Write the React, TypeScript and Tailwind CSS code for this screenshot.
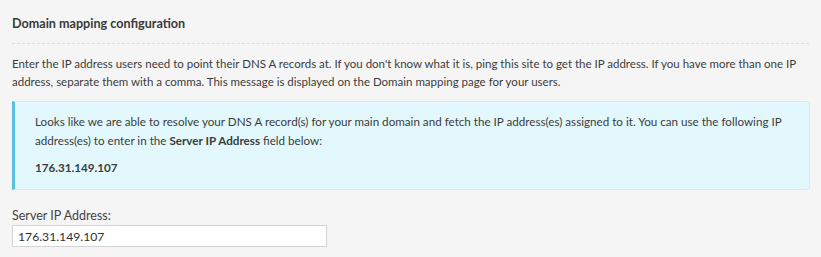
export default function App() {
  return (
    <div className="min-h-[257px] bg-[#f5f5f5] px-3 pt-[15px] font-['Lato',sans-serif] text-[#333]">
      <h3 className="text-[12.6px] font-bold leading-[18px] text-[#3a3a3a]">Domain mapping configuration</h3>
      <div className="mt-[10px] w-[797px] border-t border-dashed border-[#dcdcdc]" />
      <p className="mt-[11px] text-[11.5px] leading-[18px] text-[#3c3c3c]">
        Enter the IP address users need to point their DNS A records at. If you don't know what it is, ping this site to get the IP address. If you have more than one IP address, separate them with a comma. This message is displayed on the Domain mapping page for your users.
      </p>
      <div className="mt-[10px] w-[798px] rounded-r-[3px] border border-l-[3px] border-[#cdeef6] border-l-[#5bbfe0] bg-[#e2f8fc] pb-[12px] pl-[20px] pr-4 pt-[10px] text-[11.65px] leading-[19px] text-[#3c3c3c]">
        <p>
          Looks like we are able to resolve your DNS A record(s) for your main domain and fetch the IP address(es) assigned to it. You can use the following IP address(es) to enter in the <strong className="font-bold">Server IP Address</strong> field below:
        </p>
        <p className="mt-[8px] font-bold">176.31.149.107</p>
      </div>
      <label className="mt-[17px] block text-[12.5px] leading-[18px] text-[#444]">Server IP Address:</label>
      <input
        type="text"
        defaultValue="176.31.149.107"
        className="block h-[22px] w-[315px] border border-[#d4d4d4] bg-white px-[5px] text-[12.2px] text-[#333] outline-none"
      />
    </div>
  );
}
